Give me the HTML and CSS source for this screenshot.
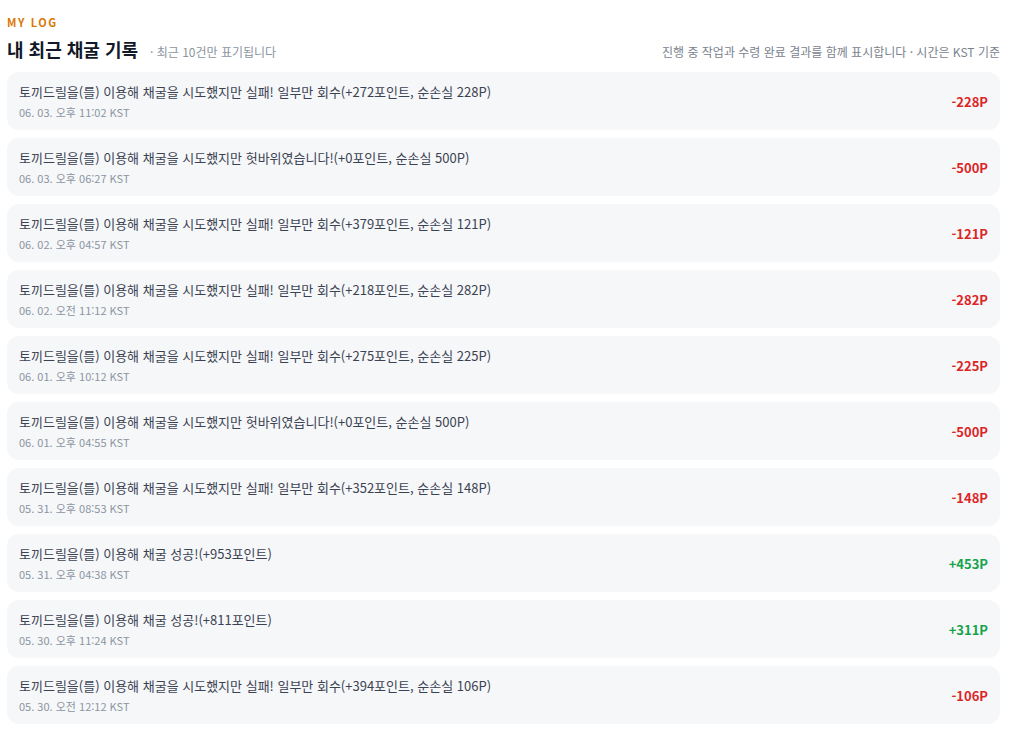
FILE: index.html
```html
<!DOCTYPE html>
<html lang="ko">
<head>
<meta charset="utf-8">
<link rel="stylesheet" href="styles.css">
</head>
<body>
<main class="log">
  <div class="eyebrow">MY LOG</div>
  <div class="head">
    <div class="head-left">
      <h1 class="title">내 최근 채굴 기록</h1>
      <span class="sub">· 최근 10건만 표기됩니다</span>
    </div>
    <div class="head-right">진행 중 작업과 수령 완료 결과를 함께 표시합니다 · 시간은 KST 기준</div>
  </div>
  <ul class="list">
    <li class="row"><div class="info"><div class="msg">토끼드릴을(를) 이용해 채굴을 시도했지만 실패! 일부만 회수(+272포인트, 순손실 228P)</div><div class="date">06. 03. 오후 11:02 KST</div></div><div class="amt neg">-228P</div></li>
    <li class="row"><div class="info"><div class="msg">토끼드릴을(를) 이용해 채굴을 시도했지만 헛바위였습니다!(+0포인트, 순손실 500P)</div><div class="date">06. 03. 오후 06:27 KST</div></div><div class="amt neg">-500P</div></li>
    <li class="row"><div class="info"><div class="msg">토끼드릴을(를) 이용해 채굴을 시도했지만 실패! 일부만 회수(+379포인트, 순손실 121P)</div><div class="date">06. 02. 오후 04:57 KST</div></div><div class="amt neg">-121P</div></li>
    <li class="row"><div class="info"><div class="msg">토끼드릴을(를) 이용해 채굴을 시도했지만 실패! 일부만 회수(+218포인트, 순손실 282P)</div><div class="date">06. 02. 오전 11:12 KST</div></div><div class="amt neg">-282P</div></li>
    <li class="row"><div class="info"><div class="msg">토끼드릴을(를) 이용해 채굴을 시도했지만 실패! 일부만 회수(+275포인트, 순손실 225P)</div><div class="date">06. 01. 오후 10:12 KST</div></div><div class="amt neg">-225P</div></li>
    <li class="row"><div class="info"><div class="msg">토끼드릴을(를) 이용해 채굴을 시도했지만 헛바위였습니다!(+0포인트, 순손실 500P)</div><div class="date">06. 01. 오후 04:55 KST</div></div><div class="amt neg">-500P</div></li>
    <li class="row"><div class="info"><div class="msg">토끼드릴을(를) 이용해 채굴을 시도했지만 실패! 일부만 회수(+352포인트, 순손실 148P)</div><div class="date">05. 31. 오후 08:53 KST</div></div><div class="amt neg">-148P</div></li>
    <li class="row"><div class="info"><div class="msg">토끼드릴을(를) 이용해 채굴 성공!(+953포인트)</div><div class="date">05. 31. 오후 04:38 KST</div></div><div class="amt pos">+453P</div></li>
    <li class="row"><div class="info"><div class="msg">토끼드릴을(를) 이용해 채굴 성공!(+811포인트)</div><div class="date">05. 30. 오후 11:24 KST</div></div><div class="amt pos">+311P</div></li>
    <li class="row"><div class="info"><div class="msg">토끼드릴을(를) 이용해 채굴을 시도했지만 실패! 일부만 회수(+394포인트, 순손실 106P)</div><div class="date">05. 30. 오전 12:12 KST</div></div><div class="amt neg">-106P</div></li>
  </ul>
</main>
</body>
</html>
```
FILE: styles.css
```css
* { box-sizing: border-box; }
html, body { margin: 0; padding: 0; background: #ffffff; }
body {
  font-family: "Noto Sans CJK KR", "Noto Sans", sans-serif;
  color: #1f2937;
}
.log {
  padding: 15px 10px 0 7px;
}
.eyebrow {
  font-size: 11px;
  line-height: 14px;
  font-weight: 700;
  letter-spacing: 1.6px;
  color: #d97706;
}
.head {
  display: flex;
  justify-content: space-between;
  align-items: baseline;
  margin-top: 8px;
  margin-bottom: 11px;
}
.head-left {
  display: flex;
  align-items: baseline;
  gap: 12px;
}
.title {
  margin: 0;
  font-size: 18px;
  line-height: 24px;
  font-weight: 700;
  color: #111827;
}
.sub {
  font-size: 12px;
  color: #8b95a1;
}
.head-right {
  font-size: 12px;
  color: #7a828e;
}
.list {
  list-style: none;
  margin: 0;
  padding: 0;
  display: flex;
  flex-direction: column;
  gap: 8px;
}
.row {
  display: flex;
  align-items: center;
  justify-content: space-between;
  background: #f6f7f9;
  border-radius: 12px;
  padding: 10px 12px;
  height: 58px;
}
.msg {
  font-size: 13px;
  line-height: 20px;
  color: #3b4352;
}
.date {
  margin-top: 2px;
  font-size: 11px;
  line-height: 16px;
  color: #8b95a1;
}
.amt {
  font-size: 13px;
  font-weight: 700;
}
.neg { color: #dc2626; }
.pos { color: #16a34a; }
```
